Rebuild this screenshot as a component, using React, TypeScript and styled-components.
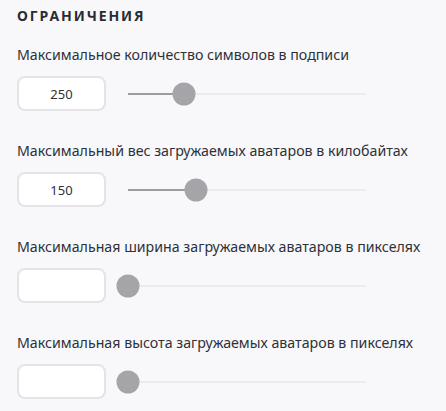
import React from 'react';
import styled, { createGlobalStyle } from 'styled-components';

const GlobalStyle = createGlobalStyle`
  html, body {
    margin: 0;
    padding: 0;
    background: #f8f8fb;
  }
  body {
    font-family: "Noto Sans", "Open Sans", sans-serif;
    color: #2e3138;
  }
`;

const Section = styled.section`
  padding: 6px 17px 0;
`;

const Title = styled.h3`
  margin: 0 0 19px;
  font-size: 14px;
  line-height: 20px;
  font-weight: 700;
  letter-spacing: 1.9px;
  color: #2a2c31;
`;

const Field = styled.div`
  margin-bottom: 30px;
`;

const Label = styled.div`
  font-size: 14.2px;
  line-height: 20px;
  margin-bottom: 11px;
  color: #2e3138;
`;

const Row = styled.div`
  display: flex;
  align-items: center;
  gap: 22px;
`;

const NumberInput = styled.input`
  box-sizing: border-box;
  width: 89px;
  height: 35px;
  border: 2px solid #e3e3e8;
  border-radius: 8px;
  background: #fff;
  text-align: center;
  font-family: "Noto Sans", "Open Sans", sans-serif;
  font-size: 13px;
  color: #2e3138;
  outline: none;
  padding: 0 6px;
`;

const Track = styled.div`
  position: relative;
  width: 238px;
  height: 2px;
  background: #e9ecef;
`;

const Fill = styled.div`
  height: 100%;
  background: #9c9ca0;
`;

const Thumb = styled.div`
  position: absolute;
  top: 50%;
  width: 23px;
  height: 23px;
  border-radius: 50%;
  background: #a5a5a9;
  transform: translate(-50%, -50%);
`;

type Limit = { label: string; value: string; pos: number };

const limits: Limit[] = [
  { label: 'Максимальное количество символов в подписи', value: '250', pos: 0.234 },
  { label: 'Максимальный вес загружаемых аватаров в килобайтах', value: '150', pos: 0.284 },
  { label: 'Максимальная ширина загружаемых аватаров в пикселях', value: '', pos: 0 },
  { label: 'Максимальная высота загружаемых аватаров в пикселях', value: '', pos: 0 },
];

const Slider = ({ pos }: { pos: number }) => (
  <Track>
    <Fill style={{ width: `${pos * 100}%` }} />
    <Thumb style={{ left: `${pos * 100}%` }} />
  </Track>
);

const App = () => (
  <>
    <GlobalStyle />
    <Section>
      <Title>ОГРАНИЧЕНИЯ</Title>
      {limits.map((l) => (
        <Field key={l.label}>
          <Label>{l.label}</Label>
          <Row>
            <NumberInput defaultValue={l.value} />
            <Slider pos={l.pos} />
          </Row>
        </Field>
      ))}
    </Section>
  </>
);

export default App;
